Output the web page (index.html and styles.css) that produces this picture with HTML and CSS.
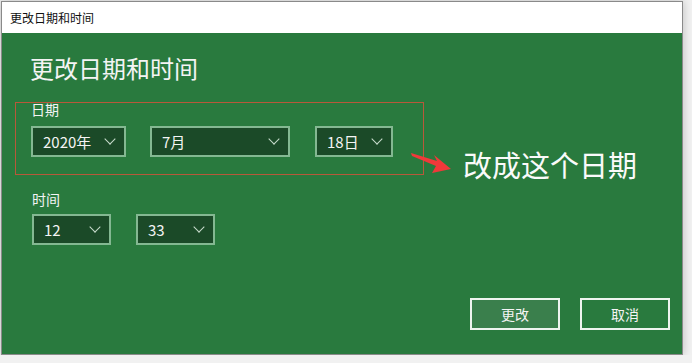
FILE: index.html
```html
<!DOCTYPE html>
<html lang="zh-CN">
<head>
    <meta charset="UTF-8">
    <title>更改日期和时间</title>
    <link rel="stylesheet" href="styles.css">
</head>
<body>

    <div class="window">
        <div class="title-bar">更改日期和时间</div>

        <div class="content">
            <h1 class="heading">更改日期和时间</h1>

            <!-- 日期 -->
            <div class="date-group">
                <div class="label">日期</div>
                <div class="row">
                    <div class="select year"><span>2020年</span><i class="chevron"></i></div>
                    <div class="select month"><span>7月</span><i class="chevron"></i></div>
                    <div class="select day"><span>18日</span><i class="chevron"></i></div>
                </div>
            </div>

            <!-- 时间 -->
            <div class="time-group">
                <div class="label">时间</div>
                <div class="row">
                    <div class="select hour"><span>12</span><i class="chevron"></i></div>
                    <div class="select minute"><span>33</span><i class="chevron"></i></div>
                </div>
            </div>

            <div class="footer">
                <button class="btn primary">更改</button>
                <button class="btn">取消</button>
            </div>
        </div>

        <!-- 标注 -->
        <svg class="arrow" width="50" height="30" viewBox="0 0 50 30">
            <polygon points="0,1 26,9 23,3 40,17 21,21 25,14 1,4" fill="#f0393a"/>
        </svg>
        <div class="note">改成这个日期</div>
    </div>

</body>
</html>
```

FILE: styles.css
```css
body {
    margin: 0;
    background-color: #f1f1f1;
    font-family: "Noto Sans CJK SC", "Noto Sans", sans-serif;
}

.window {
    position: relative;
    width: 680px;
    margin: 1px 0 0 1px;
    border: 1px solid #8a8a8a;
    box-shadow: 0 0 9px rgba(0, 0, 0, 0.22);
}

.title-bar {
    height: 31px;
    line-height: 31px;
    padding-left: 8px;
    background-color: #fff;
    font-size: 12px;
    color: #111;
}

.content {
    height: 321px;
    box-sizing: border-box;
    padding: 19px 12px 0 0;
    background-color: #297a3e;
    color: #f4f4f4;
    display: flex;
    flex-direction: column;
}

.heading {
    margin: 0 0 18px 28px;
    font-size: 24px;
    font-weight: normal;
    line-height: 32px;
}

.label {
    font-size: 14px;
    line-height: 18px;
}

.row {
    display: flex;
    gap: 24px;
}

/* 日期，红框 */
.date-group {
    width: 409px;
    margin-left: 13px;
    padding: 0 0 17px 15px;
    box-sizing: border-box;
    border: 1px solid #b8583a;
}

.date-group .label {
    margin: -3px 0 8px;
}

.time-group {
    margin: 15px 0 0 30px;
}

.time-group .label {
    margin-bottom: 6px;
}

.select {
    height: 31px;
    box-sizing: border-box;
    border: 2px solid #84b892;
    background-color: #1b4a28;
    padding: 0 8px 0 10px;
    display: flex;
    align-items: center;
    justify-content: space-between;
    font-size: 15px;
}

.year { width: 95px; }
.month { width: 140px; }
.day { width: 78px; margin-left: 1px; }
.hour { width: 79px; }
.minute { width: 79px; margin-left: 1px; }

.chevron {
    width: 7px;
    height: 7px;
    margin: 0 2px 5px 0;
    border-right: 1.3px solid #c8dccd;
    border-bottom: 1.3px solid #c8dccd;
    transform: rotate(45deg);
}

.footer {
    margin-top: auto;
    margin-bottom: 24px;
    display: flex;
    justify-content: flex-end;
    gap: 20px;
}

.btn {
    width: 90px;
    height: 32px;
    border: 2px solid #eef4ef;
    background-color: #297a3e;
    color: #f4f4f4;
    font-family: inherit;
    font-size: 14px;
}

.btn.primary {
    background-color: #3a7f4c;
}

.arrow {
    position: absolute;
    left: 409px;
    top: 150px;
}

.note {
    position: absolute;
    left: 461px;
    top: 141px;
    font-size: 29px;
    line-height: 42px;
    color: #fafafa;
}
```
